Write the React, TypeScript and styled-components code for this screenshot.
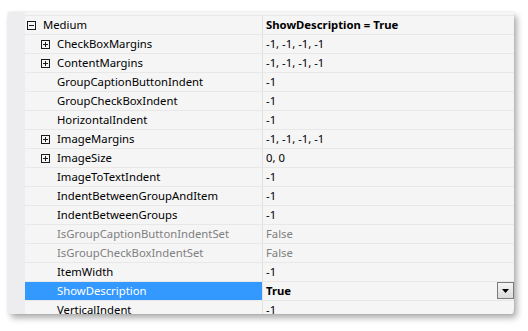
import React from "react";
import styled, { createGlobalStyle } from "styled-components";

const Global = createGlobalStyle`
  html, body { margin: 0; padding: 0; background: #ffffff; }
  body { font-family: "Noto Sans", "Open Sans", sans-serif; }
`;

const Page = styled.div`
  width: 528px;
  height: 331px;
  padding: 12px 0 0 8px;
  box-sizing: border-box;
  background: #ffffff;
`;

const Panel = styled.div`
  width: 506px;
  height: 302px;
  display: flex;
  background: #f5f5f5;
  overflow: hidden;
  box-shadow: 3px 4px 6px rgba(0, 0, 0, 0.32), 0 0 2px rgba(0, 0, 0, 0.12);
  border-bottom-left-radius: 2px 4px;
  border-bottom-right-radius: 2px 6px;
`;

const Strip = styled.div`
  width: 17px;
  flex: none;
  background: #ededf0;
`;

const Grid = styled.div`
  flex: 1;
  padding-top: 3px;
  display: flex;
  flex-direction: column;
`;

const Rows = styled.div`
  border-top: 1px solid #e8e8e8;
  display: flex;
  flex-direction: column;
`;

const Row = styled.div`
  display: grid;
  grid-template-columns: 237px 1px 1fr;
  height: 19px;
  box-sizing: border-box;
  border-bottom: 1px solid #e8e8e8;
  font-size: 11.3px;
  line-height: 18px;
`;

const NameCell = styled.div<{ $level: number; $selected?: boolean; $disabled?: boolean }>`
  display: flex;
  align-items: center;
  padding-left: ${(p) => (p.$level === 0 ? 2 : 16)}px;
  background: ${(p) => (p.$selected ? "#3399ff" : "transparent")};
  color: ${(p) => (p.$selected ? "#ffffff" : p.$disabled ? "#808080" : "#000000")};
  white-space: nowrap;
  overflow: hidden;
`;

const ExpanderSlot = styled.span`
  width: 16px;
  flex: none;
  display: flex;
  align-items: center;
`;

const Divider = styled.div`
  background: #e2e2e2;
`;

const ValueCell = styled.div<{ $bold?: boolean; $disabled?: boolean }>`
  display: flex;
  align-items: center;
  justify-content: space-between;
  padding-left: 3px;
  font-weight: ${(p) => (p.$bold ? 700 : 400)};
  color: ${(p) => (p.$disabled ? "#808080" : "#000000")};
  white-space: nowrap;
  overflow: hidden;
`;

const DropButton = styled.div`
  width: 17px;
  height: 17px;
  box-sizing: border-box;
  border: 1px solid #7a7a7a;
  background: linear-gradient(#f4f4f4, #dcdcdc);
  display: flex;
  align-items: center;
  justify-content: center;
  margin-top: -1px;
`;

const Expander = ({ open }: { open: boolean }) => (
  <svg width="9" height="9" viewBox="0 0 9 9">
    <rect x="0.5" y="0.5" width="8" height="8" fill="none" stroke="#1a1a1a" />
    <line x1="2" y1="4.5" x2="7" y2="4.5" stroke="#1a1a1a" />
    {!open && <line x1="4.5" y1="2" x2="4.5" y2="7" stroke="#1a1a1a" />}
  </svg>
);

type Item = {
  name: string;
  value: string;
  level: number;
  expander?: "open" | "closed";
  disabled?: boolean;
  selected?: boolean;
  bold?: boolean;
};

const items: Item[] = [
  { name: "Medium", value: "ShowDescription = True", level: 0, expander: "open", bold: true },
  { name: "CheckBoxMargins", value: "-1, -1, -1, -1", level: 1, expander: "closed" },
  { name: "ContentMargins", value: "-1, -1, -1, -1", level: 1, expander: "closed" },
  { name: "GroupCaptionButtonIndent", value: "-1", level: 1 },
  { name: "GroupCheckBoxIndent", value: "-1", level: 1 },
  { name: "HorizontalIndent", value: "-1", level: 1 },
  { name: "ImageMargins", value: "-1, -1, -1, -1", level: 1, expander: "closed" },
  { name: "ImageSize", value: "0, 0", level: 1, expander: "closed" },
  { name: "ImageToTextIndent", value: "-1", level: 1 },
  { name: "IndentBetweenGroupAndItem", value: "-1", level: 1 },
  { name: "IndentBetweenGroups", value: "-1", level: 1 },
  { name: "IsGroupCaptionButtonIndentSet", value: "False", level: 1, disabled: true },
  { name: "IsGroupCheckBoxIndentSet", value: "False", level: 1, disabled: true },
  { name: "ItemWidth", value: "-1", level: 1 },
  { name: "ShowDescription", value: "True", level: 1, selected: true, bold: true },
  { name: "VerticalIndent", value: "-1", level: 1 },
];

export default function App() {
  return (
    <>
      <Global />
      <Page>
        <Panel>
          <Strip />
          <Grid>
            <Rows>
              {items.map((it) => (
                <Row key={it.name}>
                  <NameCell $level={it.level} $selected={it.selected} $disabled={it.disabled}>
                    <ExpanderSlot>
                      {it.expander && <Expander open={it.expander === "open"} />}
                    </ExpanderSlot>
                    {it.name}
                  </NameCell>
                  <Divider />
                  <ValueCell $bold={it.bold} $disabled={it.disabled}>
                    {it.value}
                    {it.selected && (
                      <DropButton>
                        <svg width="7" height="4" viewBox="0 0 7 4">
                          <path d="M0 0 H7 L3.5 4 Z" fill="#000" />
                        </svg>
                      </DropButton>
                    )}
                  </ValueCell>
                </Row>
              ))}
            </Rows>
          </Grid>
        </Panel>
      </Page>
    </>
  );
}
